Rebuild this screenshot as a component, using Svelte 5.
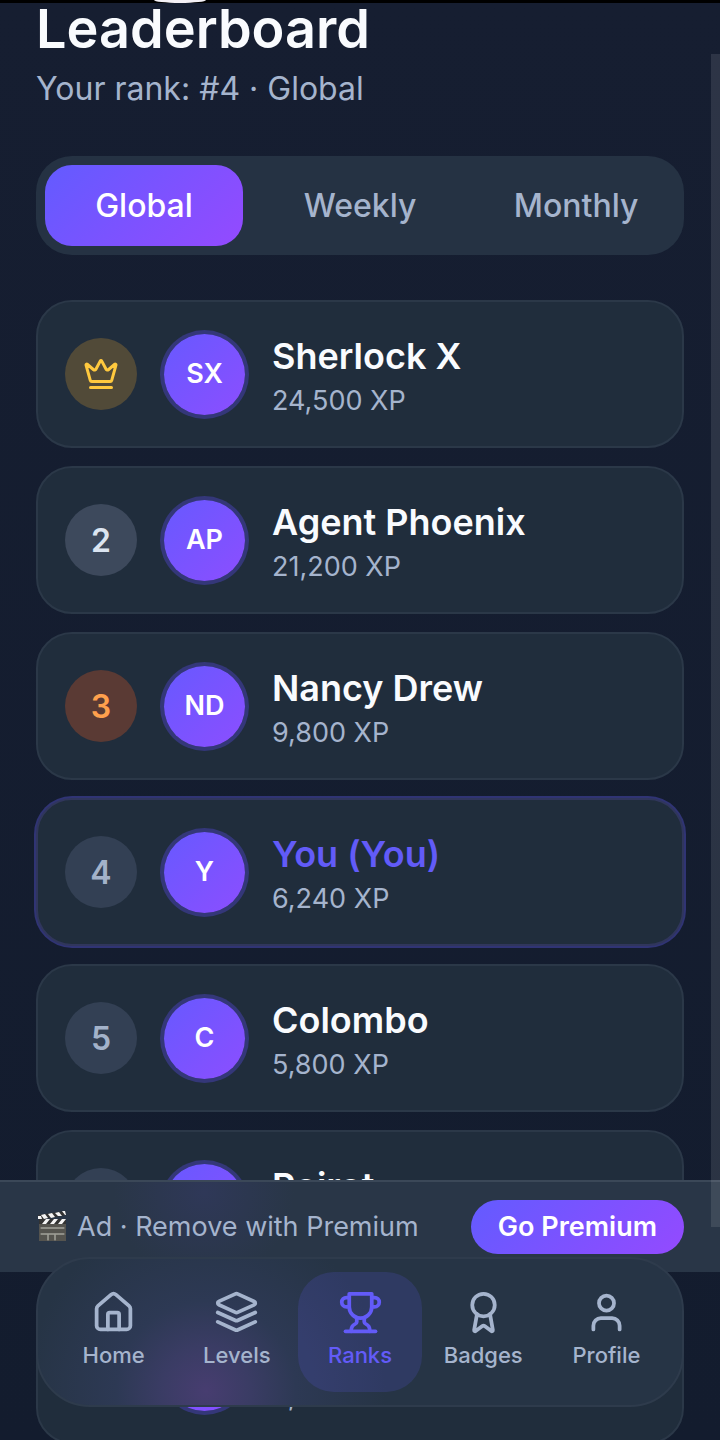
<script>
	const tabs = ['Global', 'Weekly', 'Monthly'];
	let period = $state('Global');

	const players = [
		{ rank: 1, initials: 'SX', name: 'Sherlock X', xp: '24,500' },
		{ rank: 2, initials: 'AP', name: 'Agent Phoenix', xp: '21,200' },
		{ rank: 3, initials: 'ND', name: 'Nancy Drew', xp: '9,800' },
		{ rank: 4, initials: 'Y', name: 'You (You)', xp: '6,240', you: true },
		{ rank: 5, initials: 'C', name: 'Colombo', xp: '5,800' },
		{ rank: 6, initials: 'P', name: 'Poirot', xp: '5,400' },
		{ rank: 7, initials: 'M', name: 'Marple', xp: '5,100' }
	];

	const links = [
		{
			label: 'Home',
			paths: [
				'M15 21v-8a1 1 0 0 0-1-1h-4a1 1 0 0 0-1 1v8',
				'M3 10a2 2 0 0 1 .709-1.528l7-5.999a2 2 0 0 1 2.582 0l7 5.999A2 2 0 0 1 21 10v9a2 2 0 0 1-2 2H5a2 2 0 0 1-2-2z'
			]
		},
		{
			label: 'Levels',
			paths: [
				'm12.83 2.18a2 2 0 0 0-1.66 0L2.6 6.08a1 1 0 0 0 0 1.83l8.58 3.91a2 2 0 0 0 1.66 0l8.58-3.9a1 1 0 0 0 0-1.83Z',
				'm22 12-9.17 4.16a2 2 0 0 1-1.66 0L2 12',
				'm22 17-9.17 4.16a2 2 0 0 1-1.66 0L2 17'
			]
		},
		{
			label: 'Ranks',
			paths: [
				'M6 9H4.5a2.5 2.5 0 0 1 0-5H6',
				'M18 9h1.5a2.5 2.5 0 0 0 0-5H18',
				'M4 22h16',
				'M10 14.66V17c0 .55-.47.98-.97 1.21C7.85 18.75 7 20.24 7 22',
				'M14 14.66V17c0 .55.47.98.97 1.21C16.15 18.75 17 20.24 17 22',
				'M18 2H6v7a6 6 0 0 0 12 0V2Z'
			]
		},
		{
			label: 'Badges',
			paths: [
				'm15.477 12.89 1.515 8.526a.5.5 0 0 1-.81.47l-3.58-2.687a1 1 0 0 0-1.197 0l-3.586 2.686a.5.5 0 0 1-.81-.469l1.514-8.526',
				'M18 8a6 6 0 1 1-12 0a6 6 0 1 1 12 0'
			]
		},
		{
			label: 'Profile',
			paths: [
				'M19 21v-2a4 4 0 0 0-4-4H9a4 4 0 0 0-4 4v2',
				'M16 7a4 4 0 1 1-8 0a4 4 0 1 1 8 0'
			]
		}
	];
</script>

<div class="app">
	<div class="status"><span></span></div>

	<main>
		<h1>Leaderboard</h1>
		<p class="subtitle">Your rank: #4 · Global</p>

		<div class="tabs">
			{#each tabs as tab}
				<button class:active={period === tab} onclick={() => (period = tab)}>{tab}</button>
			{/each}
		</div>

		<ol>
			{#each players as player}
				<li class:you={player.you}>
					<span class="rank rank-{player.rank}">
						{#if player.rank === 1}
							<svg class="crown" viewBox="0 0 24 24" aria-label="1">
								<path
									d="M11.562 3.266a.5.5 0 0 1 .876 0L15.39 8.87a1 1 0 0 0 1.516.294L21.183 5.5a.5.5 0 0 1 .798.519l-2.834 10.246a1 1 0 0 1-.956.734H5.81a1 1 0 0 1-.957-.734L2.02 6.02a.5.5 0 0 1 .798-.519l4.276 3.664a1 1 0 0 0 1.516-.294z"
								/>
								<path d="M5 21h14" />
							</svg>
						{:else}
							{player.rank}
						{/if}
					</span>
					<span class="avatar">{player.initials}</span>
					<div class="info">
						<h2>{player.name}</h2>
						<p>{player.xp} XP</p>
					</div>
				</li>
			{/each}
		</ol>
	</main>

	<aside class="ad">
		<p>
			<svg class="clapper" viewBox="0 0 30 32" aria-hidden="true">
				<rect x="2" y="11" width="27" height="20" fill="#55544f" />
				<path d="M1 5 28 1l1 4L2 10z" fill="#333" />
				<path d="M4 5l4-1 3 4-4 1zM11 4l4-1 3 4-4 1zM18 3l4-1 3 4-4 0zM25 1l3 0 1 4-1 0z" fill="#f4f4f4" />
				<path d="M2 9h27v5H2z" fill="#333" />
				<path d="M5 14l4-5h4l-4 5zM13 14l4-5h4l-4 5zM21 14l4-5h4l-4 5zM1 6h3l1 3H1z" fill="#f4f4f4" />
				<path d="M4 18h23M4 24h23M11 25v5M18 25v5" stroke="#c9c9c0" fill="none" />
			</svg>
			<span>Ad · Remove with Premium</span>
		</p>
		<button>Go Premium</button>
	</aside>

	<nav>
		{#each links as link}
			<a href="#{link.label.toLowerCase()}" class:active={link.label === 'Ranks'}>
				<svg viewBox="0 0 24 24" aria-hidden="true">
					{#each link.paths as d}
						<path {d} />
					{/each}
				</svg>
				<span>{link.label}</span>
			</a>
		{/each}
	</nav>

	<div class="scrollbar"></div>
</div>

<style>
	:global(body) {
		margin: 0;
		background: #151e30;
	}
	.app {
		--gradient: linear-gradient(135deg, #635bff, #944aff);
		--muted: #a5b4cd;
		position: relative;
		height: 100vh;
		overflow: hidden;
		background: linear-gradient(#161e31, #131c2e);
		color: #f9fbfe;
		font-family: Inter, 'Liberation Sans', sans-serif;
	}
	h1,
	h2,
	p,
	ol {
		margin: 0;
		padding: 0;
	}
	button {
		border: 0;
		font-family: inherit;
		cursor: pointer;
	}
	svg path {
		stroke-linecap: round;
		stroke-linejoin: round;
	}
	.status {
		height: 3px;
		padding-left: 154px;
		background: #000;
	}
	.status span {
		display: block;
		width: 52px;
		height: 3px;
		border-radius: 0 0 26px 26px / 0 0 3px 3px;
		background: #f4f1f6;
	}
	main {
		padding: 0 36px;
	}
	h1 {
		font-size: 54px;
		font-weight: 600;
		line-height: 52px;
	}
	.subtitle {
		margin: 10px 0 43px;
		color: var(--muted);
		font-size: 32px;
		line-height: 48px;
	}
	.tabs {
		display: flex;
		gap: 18px;
		padding: 9px;
		border-radius: 36px;
		background: #253243;
	}
	.tabs button {
		flex: 1;
		height: 81px;
		border-radius: 27px;
		background: none;
		color: var(--muted);
		font-size: 32px;
		font-weight: 500;
	}
	.tabs button.active {
		background: var(--gradient);
		color: #fff;
	}
	ol {
		display: flex;
		flex-direction: column;
		gap: 18px;
		margin-top: 45px;
		list-style: none;
	}
	li {
		display: flex;
		align-items: center;
		gap: 27px;
		padding: 27px;
		border: 2px solid #2b3848;
		border-radius: 36px;
		background: #202d3c;
	}
	li.you {
		border-color: #30365c;
		box-shadow: 0 0 0 2px #303474;
	}
	.rank {
		display: grid;
		place-items: center;
		width: 72px;
		height: 72px;
		border-radius: 50%;
		background: #334054;
		color: #a3b2c9;
		font-size: 32px;
		font-weight: 600;
	}
	.rank-1 {
		background: #514a38;
		color: #ffc93e;
	}
	.rank-2 {
		background: #3d495c;
		color: #dbe4f0;
	}
	.rank-3 {
		background: #5a3a34;
		color: #ffa04d;
	}
	.crown {
		width: 36px;
		height: 36px;
		fill: none;
		stroke: currentColor;
		stroke-width: 2;
	}
	.avatar {
		display: grid;
		place-items: center;
		box-sizing: border-box;
		width: 81px;
		height: 81px;
		padding-bottom: 2px;
		border-radius: 50%;
		background: linear-gradient(135deg, #6759ff, #8c4eff);
		box-shadow: 0 0 0 4px #343779;
		color: #fff;
		font-size: 27px;
		font-weight: 600;
	}
	.info {
		flex: 1;
	}
	h2 {
		font-size: 36px;
		font-weight: 600;
		line-height: 54px;
	}
	.you h2 {
		color: #625bf8;
	}
	.info p {
		color: var(--muted);
		font-size: 27px;
		line-height: 36px;
	}
	.ad {
		position: absolute;
		right: 0;
		bottom: 168px;
		left: 0;
		display: flex;
		align-items: center;
		justify-content: space-between;
		padding: 18px 36px;
		border-top: 2px solid #3b4858;
		background: radial-gradient(circle at 204px 10px, #2f3858, #293647 90px);
	}
	.ad p {
		display: flex;
		align-items: center;
		gap: 9px;
		padding-bottom: 2px;
		color: var(--muted);
		font-size: 27px;
	}
	.clapper {
		width: 32px;
		height: 32px;
	}
	.ad button {
		height: 54px;
		padding: 0 27px 2px;
		border-radius: 27px;
		background: var(--gradient);
		color: #fff;
		font-size: 27px;
		font-weight: 600;
	}
	nav {
		position: absolute;
		right: 36px;
		bottom: 33px;
		left: 36px;
		display: flex;
		padding: 13px 14px;
		border: 2px solid #2e3b4c;
		border-radius: 54px;
		background: radial-gradient(circle at 168px 132px, #473d70, #3a3c64 45px, #2d3954 90px, #263445 180px);
	}
	nav a {
		display: flex;
		flex: 1;
		flex-direction: column;
		align-items: center;
		gap: 4px;
		padding: 18px 0 20px;
		border-radius: 36px;
		color: var(--muted);
		font-size: 22px;
		font-weight: 500;
		line-height: 33px;
		text-decoration: none;
	}
	nav a.active {
		background: rgba(99, 91, 255, 0.16);
		color: #635bf8;
	}
	nav svg {
		width: 45px;
		height: 45px;
		fill: none;
		stroke: currentColor;
		stroke-width: 2;
	}
	.scrollbar {
		position: absolute;
		top: 54px;
		right: 0;
		bottom: 213px;
		width: 9px;
		background: rgba(255, 255, 255, 0.1);
	}
</style>
